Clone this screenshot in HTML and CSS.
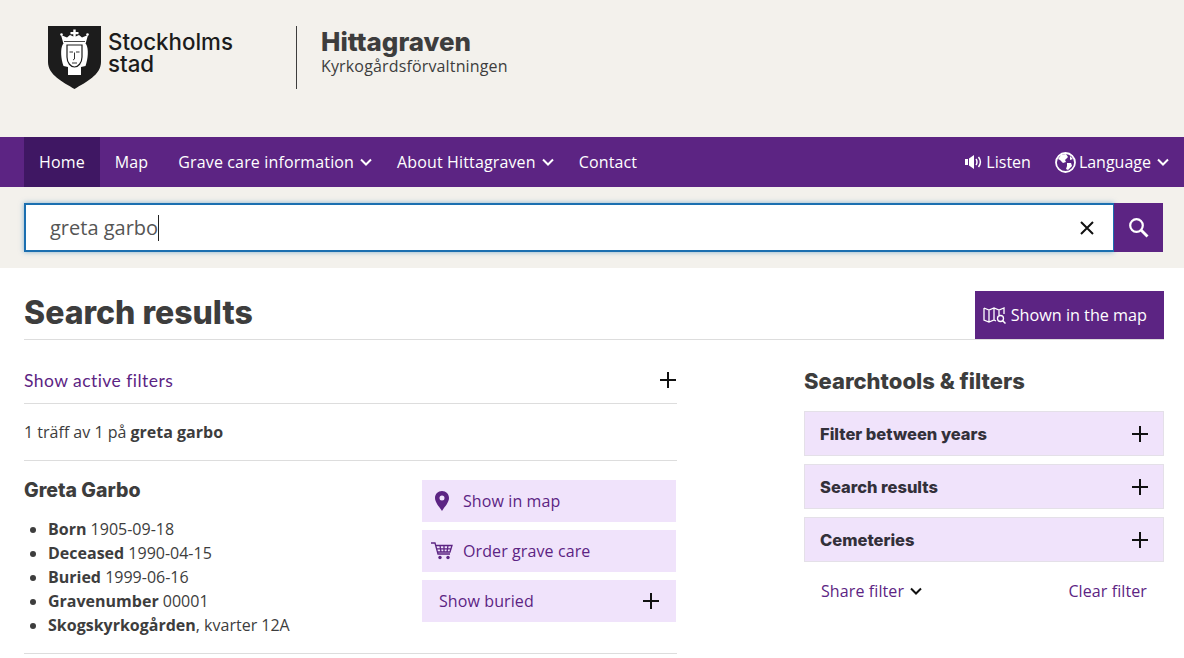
FILE: index.html
```html
<!DOCTYPE html>
<html lang="en">
<head>
<meta charset="UTF-8">
<meta name="viewport" content="width=device-width, initial-scale=1.0">
<title>Hittagraven</title>
<link rel="stylesheet" href="styles.css">
</head>
<body>
<header class="site-header">
  <div class="logo">
    <svg class="shield" width="54" height="64" viewBox="0 0 54 64">
      <path d="M0 0H53V36C53 49 38 56 26.500 63C15 56 0 49 0 36Z" fill="#1c1c1c"/>
      <path d="M13 9L19 11.500L22 9L26.500 11L31 9L34 11.500L40 9L37.500 18H15.500Z" fill="#fff"/>
      <path d="M25.300 3.500H27.700V6H30.500V8.200H27.700V11H25.300V8.200H22.500V6H25.300Z" fill="#fff"/>
      <circle cx="13.500" cy="8.500" r="1.300" fill="#fff"/>
      <circle cx="39.500" cy="8.500" r="1.300" fill="#fff"/>
      <path d="M16 15.500H37" stroke="#1c1c1c" stroke-width="0.800"/>
      <path d="M15 18H38C41 23 40 33 37.500 40L33 41V49H20V41L15.500 40C13 33 12 23 15 18Z" fill="#fff"/>
      <path d="M19 19H34V31C34 37 30 41 26.500 41C23 41 19 37 19 31Z" fill="#fff" stroke="#1c1c1c" stroke-width="1.200"/>
      <path d="M21.500 26H25M28 26H31.500M26.500 26.500V33L25 34M24 37H29" stroke="#1c1c1c" stroke-width="0.900" fill="none"/>
    </svg>
    <div class="logo-text"><div>Stockholms</div><div>stad</div></div>
  </div>
  <div class="site-name">
    <div class="site-title">Hittagraven</div>
    <div class="site-sub">Kyrkogårdsförvaltningen</div>
  </div>
</header>

<nav class="nav">
  <a class="nav-item active">Home</a>
  <a class="nav-item">Map</a>
  <a class="nav-item has-menu">Grave care information
    <svg class="chev" width="12" height="8" viewBox="0 0 12 8"><path d="M1 1.500L6 6.500L11 1.500" fill="none" stroke="#fff" stroke-width="2"/></svg>
  </a>
  <a class="nav-item has-menu">About Hittagraven
    <svg class="chev" width="12" height="8" viewBox="0 0 12 8"><path d="M1 1.500L6 6.500L11 1.500" fill="none" stroke="#fff" stroke-width="2"/></svg>
  </a>
  <a class="nav-item">Contact</a>
  <div class="nav-right">
    <a class="nav-tool">
      <svg width="18" height="18" viewBox="0 0 18 16"><path d="M0 5H3V11H0ZM4 4.500L9 1V15L4 11.500Z" fill="#fff"/><path d="M11 5C12.300 6.500 12.300 9.500 11 11M13.500 3C15.800 6 15.800 10 13.500 13" fill="none" stroke="#fff" stroke-width="1.500"/></svg>
      Listen
    </a>
    <a class="nav-tool">
      <svg width="21" height="21" viewBox="0 0 21 21"><circle cx="10.500" cy="10.500" r="9.500" fill="none" stroke="#fff" stroke-width="1.800"/><path d="M6 3L11 2L13 5L10 8L11 10L8 11L5 8L3 7ZM12 11L16 11L17 14L13 18L11 17L12 14Z M15 4L18 7L15 8Z" fill="#fff"/></svg>
      Language
      <svg class="chev" width="12" height="8" viewBox="0 0 12 8"><path d="M1 1.500L6 6.500L11 1.500" fill="none" stroke="#fff" stroke-width="2"/></svg>
    </a>
  </div>
</nav>

<div class="search-band">
  <div class="search-box">
    <span class="search-text">greta garbo</span><span class="caret"></span>
    <svg class="clear" width="16" height="16" viewBox="0 0 16 16"><path d="M2 2L14 14M14 2L2 14" stroke="#111" stroke-width="2"/></svg>
  </div>
  <button class="search-button">
    <svg width="21" height="21" viewBox="0 0 21 21"><circle cx="8.500" cy="8.500" r="6.300" fill="none" stroke="#fff" stroke-width="2.200"/><path d="M13 13L19.500 19.500" stroke="#fff" stroke-width="2.800"/></svg>
  </button>
</div>

<main class="main">
  <div class="title-row">
    <h1>Search results</h1>
    <a class="map-button">
      <svg width="23" height="18" viewBox="0 0 23 18"><path d="M1 2L6 4L11 2L16 4L21 2V8M1 2V14L6 16L11 14L13 15M6 4V16M11 2V14M16 4V9" fill="none" stroke="#fff" stroke-width="1.300"/><circle cx="17.500" cy="12.500" r="3" fill="#5c2483" stroke="#fff" stroke-width="1.300"/><path d="M19.500 14.500L22.500 17.500" stroke="#fff" stroke-width="1.500"/></svg>
      Shown in the map
    </a>
  </div>

  <div class="columns">
    <section class="results">
      <div class="active-filters">
        <span>Show active filters</span>
        <svg class="plus" width="18" height="18" viewBox="0 0 18 18"><path d="M9 1V17M1 9H17" stroke="#111" stroke-width="2"/></svg>
      </div>
      <p class="hit-count">1 träff av 1 på <b>greta garbo</b></p>
      <article class="hit">
        <div class="hit-info">
          <h3>Greta Garbo</h3>
          <ul>
            <li><b>Born</b> 1905-09-18</li>
            <li><b>Deceased</b> 1990-04-15</li>
            <li><b>Buried</b> 1999-06-16</li>
            <li><b>Gravenumber</b> 00001</li>
            <li><b>Skogskyrkogården</b>, kvarter 12A</li>
          </ul>
        </div>
        <div class="hit-actions">
          <a class="action">
            <span class="action-icon"><svg width="14" height="20" viewBox="0 0 14 20"><path fill-rule="evenodd" d="M7 0C3 0 0 3 0 7C0 11.500 4.500 16 7 20C9.500 16 14 11.500 14 7C14 3 11 0 7 0ZM7 4.500A2.500 2.500 0 1 1 7 9.500A2.500 2.500 0 1 1 7 4.500Z" fill="#5c2483"/></svg></span>
            Show in map
          </a>
          <a class="action">
            <span class="action-icon"><svg width="22" height="18" viewBox="0 0 22 18"><path d="M0 1H4L7 12H19M5 3.500H21L19 10H6.500M9 3.500L10 10M13 3.500V10M17 3.500L16 10M5.500 6.800H20" fill="none" stroke="#5c2483" stroke-width="1.300"/><circle cx="9" cy="15.500" r="1.700" fill="#5c2483"/><circle cx="17" cy="15.500" r="1.700" fill="#5c2483"/></svg></span>
            Order grave care
          </a>
          <a class="action plain">
            Show buried
            <svg class="plus" width="18" height="18" viewBox="0 0 18 18"><path d="M9 1V17M1 9H17" stroke="#111" stroke-width="2"/></svg>
          </a>
        </div>
      </article>
    </section>

    <aside class="tools">
      <h2>Searchtools &amp; filters</h2>
      <div class="filter"><span>Filter between years</span><svg class="plus" width="18" height="18" viewBox="0 0 18 18"><path d="M9 1V17M1 9H17" stroke="#111" stroke-width="2"/></svg></div>
      <div class="filter"><span>Search results</span><svg class="plus" width="18" height="18" viewBox="0 0 18 18"><path d="M9 1V17M1 9H17" stroke="#111" stroke-width="2"/></svg></div>
      <div class="filter"><span>Cemeteries</span><svg class="plus" width="18" height="18" viewBox="0 0 18 18"><path d="M9 1V17M1 9H17" stroke="#111" stroke-width="2"/></svg></div>
      <div class="filter-links">
        <a class="share">Share filter <svg class="chev" width="12" height="8" viewBox="0 0 12 8"><path d="M1 1.500L6 6.500L11 1.500" fill="none" stroke="#111" stroke-width="2"/></svg></a>
        <a>Clear filter</a>
      </div>
    </aside>
  </div>
</main>
</body>
</html>
```

FILE: styles.css
```css
body {
  font-family: "Open Sans", Arial, sans-serif;
  font-size: 16px;
  color: #3d3d3d;
  margin: 0;
  padding: 0;
  overflow: hidden;
}
.site-header {
  height: 137px;
  box-sizing: border-box;
  background: #f3f1ec;
  display: flex;
  align-items: flex-start;
  padding: 26px 0 0 48px;
}
.logo {
  display: flex;
  align-items: flex-start;
  width: 248px;
}
.shield {
  display: block;
}
.logo-text {
  font-family: Inter, Arial, sans-serif;
  font-weight: 500;
  font-size: 22.300px;
  line-height: 22px;
  color: #1c1c1c;
  margin: 5px 0 0 6px;
}
.site-name {
  border-left: 1px solid #3d3d3d;
  height: 63px;
  padding-left: 24px;
}
.site-title {
  font-family: Inter, Arial, sans-serif;
  font-weight: 800;
  font-size: 25.900px;
  line-height: 32px;
}
.site-sub {
  letter-spacing: 0.15px;
  line-height: 17px;
}
.nav {
  height: 50px;
  background: #5c2483;
  display: flex;
  padding-left: 24px;
  color: #fff;
  letter-spacing: 0.14px;
}
.nav-item {
  display: flex;
  align-items: center;
  gap: 6px;
  padding: 0 15px;
  white-space: nowrap;
}
.nav-item.has-menu {
  padding-right: 10px;
}
.nav-item.active {
  background: #3f1763;
}
.nav-right {
  margin-left: auto;
  display: flex;
  gap: 24px;
  padding-right: 15px;
  letter-spacing: 0;
}
.nav-tool {
  display: flex;
  align-items: center;
  gap: 3px;
}
.nav-tool .chev {
  margin-left: 3px;
}
.search-band {
  height: 81px;
  box-sizing: border-box;
  background: #f3f1ec;
  display: flex;
  padding: 16px 21px 0 24px;
}
.search-box {
  flex: 1;
  height: 49px;
  box-sizing: border-box;
  background: #fff;
  border: 2px solid #1b6fb0;
  border-right: 1px solid #1b6fb0;
  box-shadow: 0 0 5px rgba(27, 111, 176, 0.5);
  display: flex;
  align-items: center;
  padding: 0 18px 0 24px;
  font-size: 20px;
  color: #555;
}
.caret {
  width: 1px;
  height: 26px;
  background: #222;
}
.clear {
  margin-left: auto;
}
.search-button {
  width: 49px;
  height: 49px;
  border: none;
  padding: 0;
  background: #5c2483;
  display: flex;
  align-items: center;
  justify-content: center;
}
.main {
  padding: 23px 20px 0 24px;
}
.title-row {
  display: flex;
  justify-content: space-between;
  height: 48px;
  border-bottom: 1px solid #ddd;
}
h1 {
  font-family: Inter, Arial, sans-serif;
  font-weight: 800;
  font-size: 32px;
  line-height: 44px;
  margin: 0;
}
.map-button {
  height: 48px;
  box-sizing: border-box;
  background: #5c2483;
  color: #fff;
  font-size: 16.200px;
  display: flex;
  align-items: center;
  gap: 5px;
  padding: 0 17px 1px 8px;
}
.columns {
  display: flex;
  justify-content: space-between;
}
.results {
  width: 653px;
}
.active-filters {
  height: 64px;
  box-sizing: border-box;
  border-bottom: 1px solid #ddd;
  display: flex;
  align-items: center;
  justify-content: space-between;
  padding-top: 17px;
  font-family: Lato, Arial, sans-serif;
  font-size: 17.500px;
  letter-spacing: 0.45px;
  color: #5c2483;
}
.hit-count {
  height: 57px;
  box-sizing: border-box;
  margin: 0;
  line-height: 57px;
  border-bottom: 1px solid #ddd;
}
.hit {
  display: flex;
  justify-content: space-between;
  height: 193px;
  box-sizing: border-box;
  border-bottom: 1px solid #ddd;
  padding: 19px 1px 0 0;
}
h3 {
  font-family: Inter, Arial, sans-serif;
  font-weight: 800;
  font-size: 19.500px;
  line-height: 20px;
  margin: 0 0 17px;
}
ul {
  margin: 0;
  padding-left: 24px;
}
li {
  line-height: 24px;
}
.hit-actions {
  width: 254px;
  display: flex;
  flex-direction: column;
  gap: 8px;
}
.action {
  height: 42px;
  background: #f0e3fb;
  color: #5c2483;
  display: flex;
  align-items: center;
  letter-spacing: 0.1px;
}
.action-icon {
  width: 40px;
  margin-right: 1px;
  display: flex;
  justify-content: center;
}
.action.plain {
  justify-content: space-between;
  padding: 0 16px 0 17px;
}
.tools {
  width: 360px;
}
h2 {
  font-family: Inter, Arial, sans-serif;
  font-weight: 800;
  font-size: 22px;
  line-height: 30px;
  margin: 26px 0 15px;
}
.filter {
  height: 45px;
  box-sizing: border-box;
  background: #f0e3fb;
  border: 1px solid #e4e0e8;
  display: flex;
  align-items: center;
  justify-content: space-between;
  padding: 1px 14px 0 15px;
  margin-bottom: 8px;
  font-family: Inter, Arial, sans-serif;
  font-weight: 800;
  font-size: 16.500px;
  color: #33303a;
}
.filter .plus {
  margin-top: -1px;
}
.filter-links {
  display: flex;
  justify-content: space-between;
  padding: 10px 17px 0;
  color: #5c2483;
  letter-spacing: 0.1px;
}
.share {
  display: flex;
  align-items: center;
  gap: 6px;
}
```
